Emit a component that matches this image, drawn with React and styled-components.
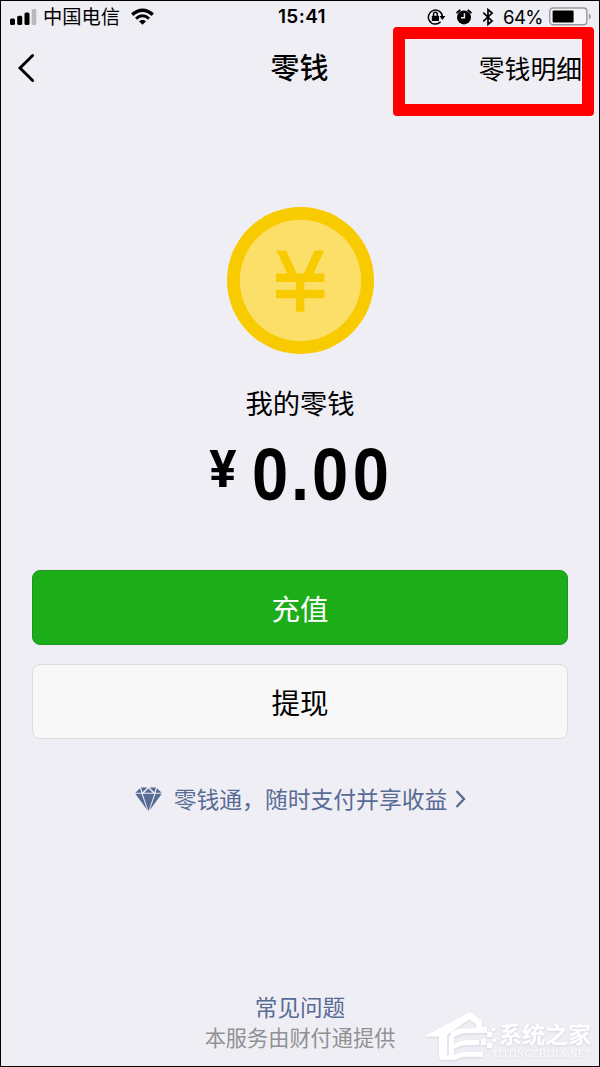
import React from "react";
import styled, { createGlobalStyle } from "styled-components";

const cjk = `"Noto Sans CJK SC", sans-serif`;
const link = "#576b95";

const GlobalStyle = createGlobalStyle`
  * { box-sizing: border-box; }
  body { margin: 0; background: #efeef4; font-family: ${cjk}; color: #000; }
`;

const Screen = styled.main`
  position: relative;
  display: flex;
  flex-direction: column;
  width: 600px;
  height: 1067px;
  overflow: hidden;
  border: 1px solid #000;
  background: #efeef4;
`;

const StatusBar = styled.div`
  display: grid;
  grid-template-columns: 1fr auto 1fr;
  align-items: center;
  height: 32px;
  padding: 0 7px 0 9px;
`;

const StatusGroup = styled.div`
  display: flex;
  align-items: center;
  justify-content: ${(p) => (p.$end ? "flex-end" : "flex-start")};
  svg { flex: none; display: block; }
`;

const StatusIcons = styled.div`
  display: flex;
  align-items: center;
  gap: 9px;
`;

const Carrier = styled.span`
  margin: 0 11px 2px 6px;
  font-size: 19.3px;
  line-height: 28px;
`;

const Clock = styled.time`
  padding-left: 2px;
  font: 600 19px/32px Inter, sans-serif;
  letter-spacing: 0.4px;
`;

const Percent = styled.span`
  margin: 0 6px 0 9px;
  font: 400 18.6px/32px Inter, sans-serif;
  letter-spacing: -0.6px;
`;

const NavBar = styled.header`
  display: grid;
  grid-template-columns: 1fr auto 1fr;
  align-items: center;
  height: 70px;
  padding: 0 17px 0 16px;
`;

const BackButton = styled.button`
  justify-self: start;
  display: flex;
  padding: 0;
  border: 0;
  background: none;
`;

const Title = styled.h1`
  margin: 0 0 5px;
  font-size: 29px;
  font-weight: 500;
  line-height: 60px;
`;

const NavLink = styled.a`
  justify-self: end;
  font-size: 25.8px;
  line-height: 68px;
`;

const Highlight = styled.div`
  position: absolute;
  left: 392px;
  top: 26px;
  width: 201px;
  height: 89px;
  border: 12px solid #fe0000;
  border-radius: 4px;
`;

const Balance = styled.section`
  display: flex;
  flex-direction: column;
  align-items: center;
  padding-top: 104px;
`;

const Label = styled.p`
  margin: 28px 0 0;
  font-size: 27.3px;
  line-height: 40px;
`;

const Amount = styled.div`
  display: flex;
  align-items: flex-start;
  height: 86px;
  margin-top: 10px;
`;

const Currency = styled.span`
  margin-right: 15px;
  font: 700 51px/75px Roboto, sans-serif;
`;

const Value = styled.span`
  margin-right: -22px;
  font: 700 74px/86px "Liberation Sans", Arial, sans-serif;
  letter-spacing: 5.3px;
  transform: scaleX(0.88);
  transform-origin: left;
`;

const Whole = styled.span`
  letter-spacing: 3.2px;
`;

const Actions = styled.div`
  display: flex;
  flex-direction: column;
  gap: 19px;
  padding: 52px 31px 0;
`;

const Button = styled.button`
  height: 75px;
  padding: 0;
  border: 1px solid ${(p) => (p.$primary ? "#1f9420" : "#dddde0")};
  border-radius: 8px;
  background: ${(p) => (p.$primary ? "#1cad19" : "#f8f8f8")};
  color: ${(p) => (p.$primary ? "#fff" : "#000")};
  font: 400 28.5px/72px ${cjk};
`;

const Promo = styled.a`
  display: flex;
  align-items: center;
  justify-content: center;
  height: 40px;
  margin-top: 40px;
  padding-left: 1px;
  color: ${link};
  font-size: 22.8px;
  line-height: 38px;
  svg { flex: none; }
`;

const PromoText = styled.span`
  margin: 0 8px 0 12px;
`;

const Footer = styled.footer`
  display: flex;
  flex-direction: column;
  align-items: center;
  margin-top: auto;
  padding-bottom: 14px;
`;

const FaqLink = styled.a`
  color: ${link};
  font-size: 22.6px;
  line-height: 30px;
`;

const Provider = styled.span`
  color: #919194;
  font-size: 21.2px;
  line-height: 30px;
`;

const Watermark = styled.div`
  position: absolute;
  left: 423px;
  top: 1009px;
  display: flex;
  color: #fff;
  filter: drop-shadow(0 1px 1px rgba(90, 90, 110, 0.16));
`;

const Brand = styled.div`
  display: flex;
  flex-direction: column;
  margin-left: -6px;
  white-space: nowrap;
`;

const BrandName = styled.span`
  margin: 8px 0 1px 8px;
  font-size: 23px;
  font-weight: 700;
  line-height: 30px;
`;

const BrandSite = styled.span`
  font: 400 9.5px/10px "Liberation Serif", serif;
  letter-spacing: 0.85px;
`;

const Signal = () => (
  <svg width="27" height="18" viewBox="0 0 27 18">
    <rect x="0" y="10.5" width="5" height="6.5" rx="1.5" />
    <rect x="7.2" y="7.7" width="5" height="9.3" rx="1.5" />
    <rect x="14.5" y="4.5" width="5" height="12.5" rx="1.5" />
    <rect x="21.7" y="1" width="4.6" height="16" rx="1.5" fill="#b9b8bf" />
  </svg>
);

const Wifi = () => (
  <svg width="23" height="18" viewBox="0 0 23 18" fill="none" stroke="#000">
    <path d="M1.2 6.600Q11.500 -2.200 21.800 6.600" strokeWidth="3.4" />
    <path d="M5 10.600Q11.500 5 18 10.600" strokeWidth="3" />
    <path d="M8 13.300Q11.500 10.300 15 13.300L11.500 16.800z" fill="#000" stroke="none" />
  </svg>
);

const RotationLock = () => (
  <svg width="19" height="18" viewBox="0 0 19 18">
    <path d="M13.600 13.800A7 7 0 1 1 15.400 9" fill="none" stroke="#000" strokeWidth="1.5" />
    <path d="M12.400 8h6l-3 3.900z" />
    <rect x="4.8" y="7.8" width="7.2" height="5.2" rx=".6" />
    <path d="M6.500 8V6.200a1.900 1.900 0 0 1 3.800 0V8" fill="none" stroke="#000" strokeWidth="1.4" />
  </svg>
);

const Alarm = () => (
  <svg width="18" height="18" viewBox="0 0 18 18">
    <circle cx="9" cy="9.4" r="7" />
    <path d="M2.200 4.600 4.700 2.400M15.800 4.600 13.300 2.400" stroke="#000" strokeWidth="2" strokeLinecap="round" />
    <path d="M9.400 5.300v4.500H6" fill="none" stroke="#efeef4" strokeWidth="1.4" />
  </svg>
);

const Bluetooth = () => (
  <svg width="12" height="18" viewBox="0 0 12 19" fill="none" stroke="#000" strokeWidth="1.8">
    <path d="M1 5 10.300 13.600 6 17.300V1.700L10.300 5.400 1 14" />
  </svg>
);

const Battery = () => (
  <svg width="43" height="20" viewBox="0 0 43 20">
    <rect x=".8" y="1" width="37" height="16.8" rx="3.2" fill="#f6f6f9" stroke="#99989e" strokeWidth="1.4" />
    <rect x="3.6" y="3.6" width="21" height="11.8" rx=".8" />
    <path d="M39.800 6.600c2.600 1 2.600 5 0 6z" fill="#99989e" />
  </svg>
);

const Chevron = () => (
  <svg width="19" height="30" viewBox="0 0 19 30" fill="none" stroke="#000" strokeWidth="2.9" strokeLinecap="round">
    <path d="M15.600 2.500 3 15l12.600 12.500" />
  </svg>
);

const Coin = () => (
  <svg width="147" height="147" viewBox="0 0 147 147" fill="#f8ca00">
    <circle cx="73.5" cy="73.5" r="73.5" />
    <circle cx="73.5" cy="73.5" r="60.7" fill="#fbdf69" />
    <path d="M49.500 43.500h9.700l10.600 23h7.200l10.600-23h9.700L86.500 66.500h10.800V75h-20v7.700h20v8.600h-20v13.400H69V91.300H49v-8.600h20V75H49v-8.500h11.300z" />
  </svg>
);

const Diamond = () => (
  <svg width="27" height="25" viewBox="0 0 27 25" fill={link}>
    <path d="M6 .5h6.400L7.600 5.300zM14.600.5H21l-1.600 4.800zM13.500 1.400l4.300 4.300H9.200zM5 1.200l1.400 4.500H.300zM22 1.200l4.700 4.500h-6.100z" />
    <path d="M.2 6.800h6.300l5.900 16.400zM7.700 6.800h11.600l-5.800 17.400zM20.500 6.800h6.300L14.700 23.200z" />
  </svg>
);

const LinkArrow = () => (
  <svg width="11" height="20" viewBox="0 0 11 20" fill="none" stroke={link} strokeWidth="2.3">
    <path d="M1.500 2 9 10l-7.500 8" />
  </svg>
);

const HouseLogo = () => (
  <svg width="73" height="50" viewBox="0 0 73 50" fill="#fff">
    <path d="M0 26.500 46 2l12 8.500v8l-6 1.500v-6l-7-4.500-22 15.500v20h7v5H19q-4 0-4-4V26.500z" />
    <path d="M27 22c8-5 17-3 31-4v5c-14 0-20-1-28 4v7c8-5 14-4 25-4v5c-12 0-17-1-25 4v6c8-4 14-3 29-3v5c-13 0-20-1-27 2.500h-7V28z" />
    <path d="M58 17h5v6h-5zM63 22h5v5h-5zM57 29h5v6h-5zM63 33h5v5h-5zM68 18h3v3h-3zM69 29h3v3h-3z" />
  </svg>
);

export default function App() {
  return (
    <>
      <GlobalStyle />
      <Screen>
        <StatusBar>
          <StatusGroup>
            <Signal />
            <Carrier>中国电信</Carrier>
            <Wifi />
          </StatusGroup>
          <Clock>15:41</Clock>
          <StatusGroup $end>
            <StatusIcons>
              <RotationLock />
              <Alarm />
              <Bluetooth />
            </StatusIcons>
            <Percent>64%</Percent>
            <Battery />
          </StatusGroup>
        </StatusBar>
        <NavBar>
          <BackButton aria-label="返回">
            <Chevron />
          </BackButton>
          <Title>零钱</Title>
          <NavLink>零钱明细</NavLink>
        </NavBar>
        <Balance>
          <Coin />
          <Label>我的零钱</Label>
          <Amount>
            <Currency>¥</Currency>
            <Value>
              <Whole>0.</Whole>00
            </Value>
          </Amount>
        </Balance>
        <Actions>
          <Button $primary>充值</Button>
          <Button>提现</Button>
        </Actions>
        <Promo>
          <Diamond />
          <PromoText>零钱通，随时支付并享收益</PromoText>
          <LinkArrow />
        </Promo>
        <Footer>
          <FaqLink>常见问题</FaqLink>
          <Provider>本服务由财付通提供</Provider>
        </Footer>
        <Highlight />
        <Watermark>
          <HouseLogo />
          <Brand>
            <BrandName>系统之家</BrandName>
            <BrandSite>XITONGZHIJIA.NET</BrandSite>
          </Brand>
        </Watermark>
      </Screen>
    </>
  );
}
